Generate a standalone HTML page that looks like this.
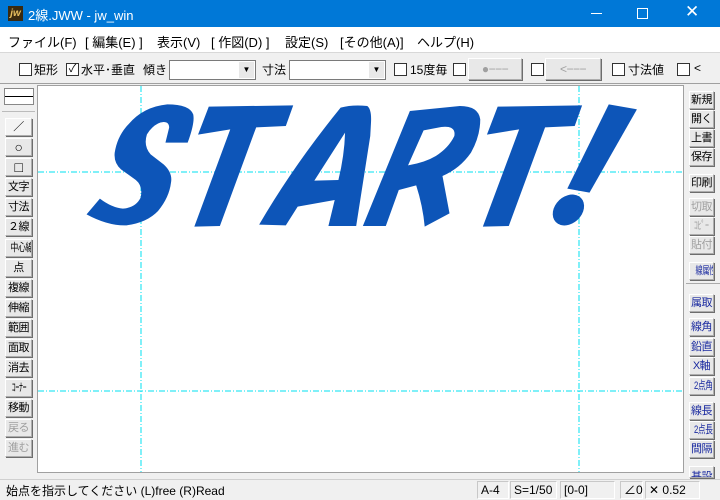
<!DOCTYPE html>
<html><head><meta charset="utf-8"><style>
*{margin:0;padding:0;box-sizing:border-box}
body{width:720px;height:500px;overflow:hidden;background:#f0f0f0;font-family:"Liberation Sans","Noto Sans CJK JP",sans-serif;position:relative;font-size:12px;color:#000}
.a{position:absolute;white-space:nowrap}
#title{left:0;top:0;width:720px;height:27px;background:#0078d7;color:#fff}
#menu{left:0;top:27px;width:720px;height:26px;background:#fff;border-bottom:1px solid #d8d8d8}
.cb{position:absolute;width:13px;height:13px;border:1px solid #333;background:#fff}
.combo{position:absolute;height:20px;border:1px solid #7a7a7a;background:#fff}
.btn{position:absolute;background:#e8e8e8;border:1px solid #adadad;border-top-color:#fff;border-left-color:#fff;box-shadow:1px 1px 0 #6d6d6d;font-size:11px;text-align:center;line-height:17px;letter-spacing:-0.5px;white-space:nowrap;overflow:hidden}
.btn span{display:inline-block;transform:scaleX(0.72);transform-origin:center}
.L{left:5px;width:27px;height:18px}
.R{left:689px;width:25px;height:18px}
.g{color:#a0a0a0}
.b{color:#1a2aa0}
.sb{position:absolute;top:481px;height:18px;border:1px solid #c8c8c8;border-right-color:#fff;border-bottom-color:#fff;line-height:16px;font-size:12px;padding-left:3px}
</style></head><body>
<div class="a" id="title">
 <div class="a" style="left:8px;top:6px;width:15px;height:15px;background:#3a2a10;color:#e8c060;font-size:10px;font-style:italic;font-weight:bold;line-height:15px;text-align:center">jw</div>
 <div class="a" style="left:28px;top:5px;font-size:13px">2線.JWW - jw_win</div>
 <div class="a" style="left:591px;top:13px;width:11px;height:1px;background:#fff"></div>
 <div class="a" style="left:637px;top:8px;width:11px;height:11px;border:1px solid #fff"></div>
 <div class="a" style="left:685px;top:2px;font-size:17px;font-weight:300">✕</div>
</div>
<div class="a" id="menu">
 <div class="a" style="left:8px;top:5px;font-size:13px">ファイル(F)</div>
 <div class="a" style="left:85px;top:5px;font-size:13px">[ 編集(E) ]</div>
 <div class="a" style="left:157px;top:5px;font-size:13px">表示(V)</div>
 <div class="a" style="left:211px;top:5px;font-size:13px">[ 作図(D) ]</div>
 <div class="a" style="left:285px;top:5px;font-size:13px">設定(S)</div>
 <div class="a" style="left:340px;top:5px;font-size:13px">[その他(A)]</div>
 <div class="a" style="left:417px;top:5px;font-size:13px">ヘルプ(H)</div>
</div>
<div class="cb" style="left:19px;top:63px"></div><div class="a" style="left:34px;top:61px">矩形</div>
<div class="cb" style="left:66px;top:63px;font-size:11px;line-height:11px;text-align:center">✓</div><div class="a" style="left:81px;top:61px">水平･垂直</div>
<div class="a" style="left:143px;top:61px">傾き</div>
<div class="combo" style="left:169px;top:60px;width:87px"><div class="a" style="right:1px;top:1px;width:15px;height:16px;background:#e8e8e8;font-size:8px;text-align:center;line-height:16px">▼</div></div>
<div class="a" style="left:262px;top:61px">寸法</div>
<div class="combo" style="left:289px;top:60px;width:97px"><div class="a" style="right:1px;top:1px;width:15px;height:16px;background:#e8e8e8;font-size:8px;text-align:center;line-height:16px">▼</div></div>
<div class="cb" style="left:394px;top:63px"></div><div class="a" style="left:410px;top:61px">15度毎</div>
<div class="cb" style="left:453px;top:63px"></div>
<div class="btn" style="left:468px;top:58px;width:54px;height:22px;line-height:20px;color:#a0a0a0;font-size:12px">●−−−</div>
<div class="cb" style="left:531px;top:63px"></div>
<div class="btn" style="left:545px;top:58px;width:56px;height:22px;line-height:20px;color:#a0a0a0;font-size:12px">&lt;−−−</div>
<div class="cb" style="left:612px;top:63px"></div><div class="a" style="left:628px;top:61px">寸法値</div>
<div class="cb" style="left:677px;top:63px"></div><div class="a" style="left:694px;top:61px">&lt;</div>
<div class="a" style="left:0;top:83px;width:720px;height:1px;background:#a0a0a0"></div>
<div class="a" style="left:4px;top:88px;width:30px;height:17px;border:1px solid #888;background:#fff"><div style="margin-top:7px;height:1px;background:#000"></div></div>
<div class="a" style="left:2px;top:111px;width:33px;height:1px;background:#bbb"></div>
<div class="btn L" style="top:118px;background:#f4f4f4">／</div>
<div class="btn L" style="top:138px;font-size:14px">○</div>
<div class="btn L" style="top:158px;font-size:14px">□</div>
<div class="btn L" style="top:178px">文字</div>
<div class="btn L" style="top:198px">寸法</div>
<div class="btn L" style="top:218px">２線</div>
<div class="btn L" style="top:239px"><span>中心線</span></div>
<div class="btn L" style="top:259px">点</div>
<div class="btn L" style="top:279px">複線</div>
<div class="btn L" style="top:299px">伸縮</div>
<div class="btn L" style="top:319px">範囲</div>
<div class="btn L" style="top:339px">面取</div>
<div class="btn L" style="top:359px">消去</div>
<div class="btn L" style="top:379px"><span>ｺｰﾅｰ</span></div>
<div class="btn L" style="top:399px">移動</div>
<div class="btn L g" style="top:419px">戻る</div>
<div class="btn L g" style="top:439px">進む</div>
<div class="a" style="left:37px;top:85px;width:647px;height:388px;background:#fff;border:1px solid #a0a0a0">
<svg width="645" height="386" style="position:absolute;left:0;top:0">
<g stroke="#00e0f0" stroke-width="1" stroke-dasharray="6,2,1,2">
<line x1="103" y1="0" x2="103" y2="386"/><line x1="541" y1="0" x2="541" y2="386"/>
<line x1="0" y1="86" x2="645" y2="86"/><line x1="0" y1="305" x2="645" y2="305"/>
</g>
<g transform="translate(33,0) scale(0.37037,0.3333)" fill="#0d55b8" fill-rule="evenodd">
<path d="M315,170 L255,170 L265,125 Q265,108 250,108 Q225,110 205,145 Q195,180 215,205 L250,235 Q275,260 270,290 Q265,335 235,375 Q205,410 150,418 Q100,420 42,385 L78,338 Q110,365 140,368 Q175,365 188,335 Q195,300 175,282 L135,250 Q115,230 118,200 Q125,150 155,115 Q195,62 260,55 Q320,55 330,85 Q335,110 315,170Z"/>
<path d="M372,62 L600,58 L580,120 L500,124 L402,420 L333,422 L430,130 L343,146Z"/>
<path d="M728,65 Q760,55 800,60 Q812,70 810,110 L808,150 L770,420 L695,420 L712,342 L612,362 L580,418 L508,416 Q600,240 728,65Z M740,140 L657,284 L722,282 Q738,210 740,140Z"/>
<path d="M915,75 L1050,60 Q1100,60 1105,100 Q1105,150 1080,200 Q1050,248 1003,270 L1022,382 L955,422 Q950,360 932,298 L885,312 L850,420 L788,420Z M952,133 L1000,123 Q1040,118 1035,150 Q1020,185 985,210 Q955,230 910,238Z"/>
<path d="M1152,62 L1380,58 L1360,120 L1280,124 L1182,420 L1112,422 L1210,130 L1123,146Z"/>
<path d="M1452,55 L1528,70 L1400,320 L1340,308Z"/>
<ellipse cx="1343" cy="372" rx="38" ry="50" transform="rotate(35 1343 372)"/>
</g>
</svg></div>
<div class="btn R" style="top:91px">新規</div>
<div class="btn R" style="top:110px">開く</div>
<div class="btn R" style="top:129px">上書</div>
<div class="btn R" style="top:148px">保存</div>
<div class="btn R" style="top:174px">印刷</div>
<div class="btn R g" style="top:198px">切取</div>
<div class="btn R g" style="top:217px"><span>ｺﾋﾟｰ</span></div>
<div class="btn R g" style="top:236px">貼付</div>
<div class="btn R b" style="top:262px"><span style="transform:scaleX(0.65)">線属性</span></div>
<div class="a" style="left:686px;top:283px;width:34px;height:1px;background:#aaa"></div>
<div class="btn R b" style="top:294px">属取</div>
<div class="btn R b" style="top:318px">線角</div>
<div class="btn R b" style="top:338px">鉛直</div>
<div class="btn R b" style="top:357px">X軸</div>
<div class="btn R b" style="top:377px"><span style="transform:scaleX(0.7)">2点角</span></div>
<div class="btn R b" style="top:402px">線長</div>
<div class="btn R b" style="top:421px"><span style="transform:scaleX(0.7)">2点長</span></div>
<div class="btn R b" style="top:440px">間隔</div>
<div class="btn R b" style="top:466px;height:12px;line-height:20px">基設</div>
<div class="a" style="left:0;top:479px;width:720px;height:1px;background:#d0d0d0"></div>
<div class="a" style="left:6px;top:482px;font-size:12px">始点を指示してください (L)free (R)Read</div>
<div class="sb" style="left:477px;width:32px">A-4</div>
<div class="sb" style="left:510px;width:47px">S=1/50</div>
<div class="sb" style="left:560px;width:55px">[0-0]</div>
<div class="sb" style="left:620px;width:23px">∠0</div>
<div class="sb" style="left:645px;width:55px">✕ 0.52</div>
</body></html>
